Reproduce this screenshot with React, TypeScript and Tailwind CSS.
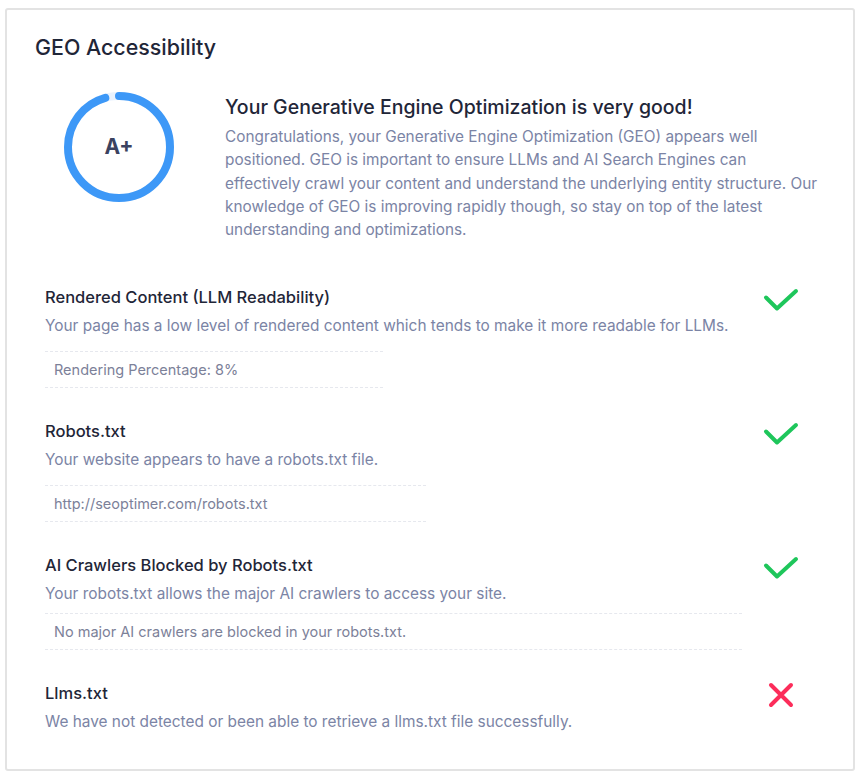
const checks = [
  {
    title: "Rendered Content (LLM Readability)",
    desc: "Your page has a low level of rendered content which tends to make it more readable for LLMs.",
    detail: "Rendering Percentage: 8%",
    boxClass: "w-[338px] mt-[13px]",
    pass: true,
  },
  {
    title: "Robots.txt",
    desc: "Your website appears to have a robots.txt file.",
    detail: "http://seoptimer.com/robots.txt",
    boxClass: "w-[381px] mt-[13px]",
    pass: true,
  },
  {
    title: "AI Crawlers Blocked by Robots.txt",
    desc: "Your robots.txt allows the major AI crawlers to access your site.",
    detail: "No major AI crawlers are blocked in your robots.txt.",
    boxClass: "w-[697px] mt-[7px]",
    pass: true,
  },
  {
    title: "Llms.txt",
    desc: "We have not detected or been able to retrieve a llms.txt file successfully.",
    detail: null,
    boxClass: "",
    pass: false,
  },
];

const GradeRing = ({ grade, percent }: { grade: string; percent: number }) => {
  const r = 51;
  const c = 2 * Math.PI * r;
  return (
    <div className="relative w-[110px] h-[110px] shrink-0">
      <svg width="110" height="110" viewBox="0 0 110 110">
        <circle cx="55" cy="55" r={r} fill="none" stroke="#e9f2fd" strokeWidth="8" />
        <circle
          cx="55"
          cy="55"
          r={r}
          fill="none"
          stroke="#3d98f7"
          strokeWidth="8"
          strokeLinecap="round"
          strokeDasharray={`${c * percent} ${c}`}
          transform="rotate(-90 55 55)"
        />
      </svg>
      <div className="absolute inset-0 flex items-center justify-center text-[21px] font-bold text-[#3b4260]">
        {grade}
      </div>
    </div>
  );
};

const CheckIcon = () => (
  <svg width="36" height="24" viewBox="0 0 36 24" fill="none">
    <path
      d="M3 9.5 L14 20.5 L33 3"
      stroke="#1ec65b"
      strokeWidth="4"
      strokeLinecap="round"
      strokeLinejoin="round"
    />
  </svg>
);

const CrossIcon = () => (
  <svg width="28" height="28" viewBox="0 0 28 28" fill="none">
    <path
      d="M4 4 L24 24 M24 4 L4 24"
      stroke="#fc2d5a"
      strokeWidth="4"
      strokeLinecap="round"
    />
  </svg>
);

export default function App() {
  return (
    <div className="min-h-screen bg-white pt-[8px] pl-[5px] font-['Inter','Noto_Sans',sans-serif]">
      <div className="w-[850px] h-[763px] border-2 border-[#e3e3e3] rounded-[3px] bg-white pt-[23px] pl-[28px] pr-[36px]">
        {/* Header */}
        <h2 className="text-[21.4px] leading-[28px] font-medium text-[#1f2638]">
          GEO Accessibility
        </h2>

        {/* Grade summary */}
        <div className="mt-[31px] flex items-start pl-[29px] gap-[51px]">
          <GradeRing grade="A+" percent={0.955} />
          <div className="w-[592px]">
            <h3 className="mt-[1px] text-[19.5px] leading-[28px] font-medium text-[#1f2638]">
              Your Generative Engine Optimization is very good!
            </h3>
            <p className="mt-[4px] text-[15.35px] leading-[23.3px] text-[#7b84a5]">
              Congratulations, your Generative Engine Optimization (GEO) appears well
              positioned. GEO is important to ensure LLMs and AI Search Engines can
              effectively crawl your content and understand the underlying entity
              structure. Our knowledge of GEO is improving rapidly though, so stay on
              top of the latest understanding and optimizations.
            </p>
          </div>
        </div>

        {/* Checks */}
        <div className="mt-[44px] pl-[10px] flex flex-col gap-[31px]">
          {checks.map((check, index) => (
            <div key={index} className="flex items-start">
              <div className="flex-1">
                <div className="text-[16.5px] leading-[24px] font-medium text-[#1f2638]">
                  {check.title}
                </div>
                <div className="mt-[5px] text-[15.4px] leading-[24px] text-[#7b84a5]">
                  {check.desc}
                </div>
                {check.detail && (
                  <div
                    className={`${check.boxClass} border-y border-dashed border-[#e6e8ee] h-[37px] flex items-center pl-[9px] text-[14.5px] text-[#7c8199]`}
                  >
                    {check.detail}
                  </div>
                )}
              </div>
              {check.pass ? (
                <div className="w-[72px] flex justify-center pt-[3px]">
                  <CheckIcon />
                </div>
              ) : (
                <div className="w-[72px] flex justify-center">
                  <CrossIcon />
                </div>
              )}
            </div>
          ))}
        </div>
      </div>
    </div>
  );
}
